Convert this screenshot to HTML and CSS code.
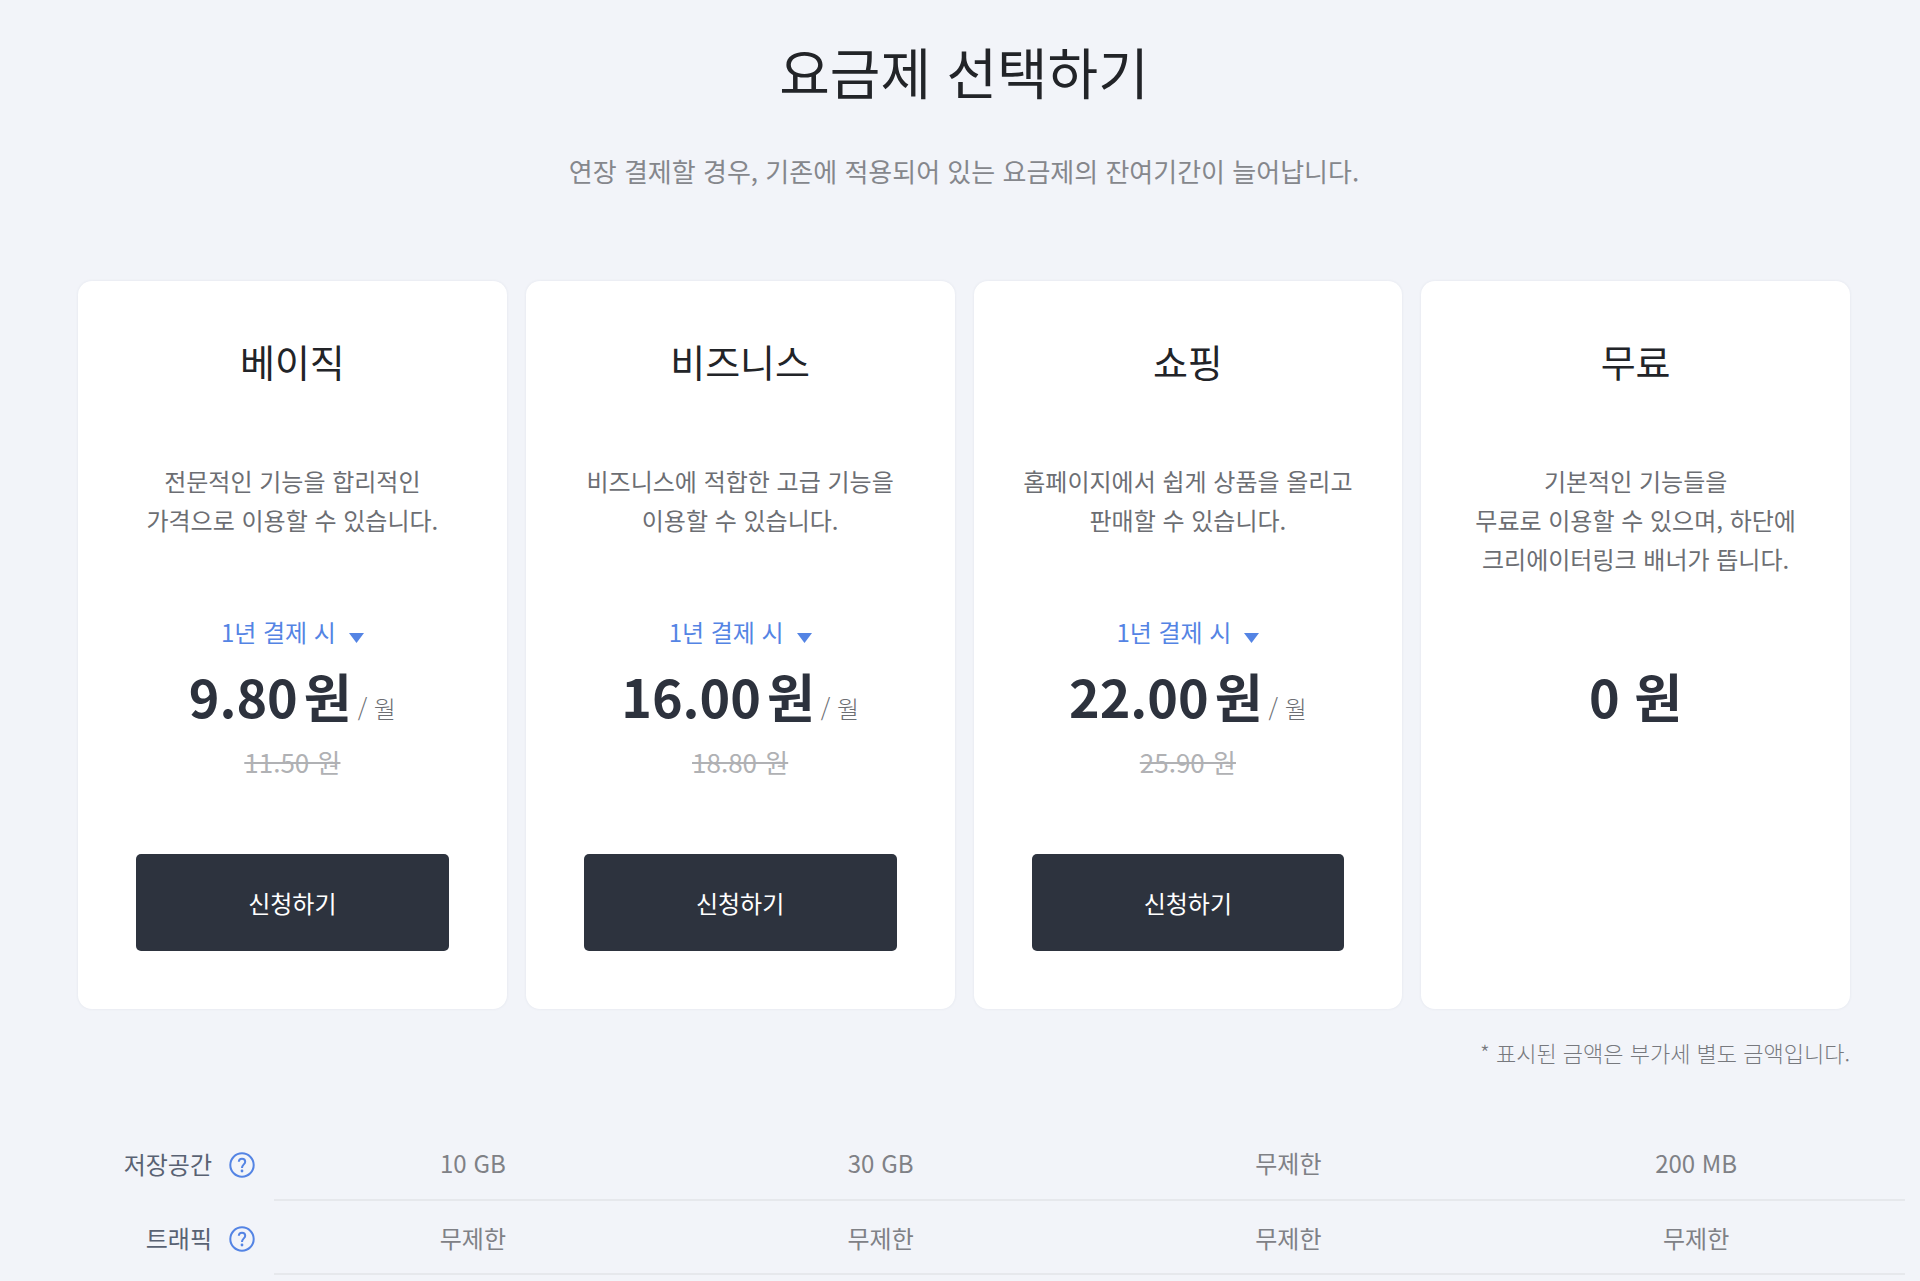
FILE: index.html
```html
<!DOCTYPE html>
<html lang="ko">
<head>
    <meta charset="UTF-8">
    <meta name="viewport" content="width=device-width, initial-scale=1.0">
    <title>요금제 선택하기</title>
    <link rel="stylesheet" href="styles.css">
</head>
<body>
    <header class="page-header">
        <h1>요금제 선택하기</h1>
        <p>연장 결제할 경우, 기존에 적용되어 있는 요금제의 잔여기간이 늘어납니다.</p>
    </header>

    <main>
        <section class="pricing">
            <div class="plans">
                <article class="plan">
                    <h2>베이직</h2>
                    <p class="plan-desc">전문적인 기능을 합리적인<br>가격으로 이용할 수 있습니다.</p>
                    <div class="plan-period">
                        <div class="period-select">
                            <select aria-label="베이직 결제 기간">
                                <option>1년 결제 시</option>
                            </select>
                            <svg class="caret" viewBox="0 0 15 10" aria-hidden="true"><path d="M0 0h15L7.5 10z"/></svg>
                        </div>
                    </div>
                    <p class="plan-price"><strong>9.80</strong><strong class="won">원</strong><span class="per">/ 월</span></p>
                    <p class="plan-old"><del>11.50 원</del></p>
                    <button type="button" class="btn-apply">신청하기</button>
                </article>

                <article class="plan">
                    <h2>비즈니스</h2>
                    <p class="plan-desc">비즈니스에 적합한 고급 기능을<br>이용할 수 있습니다.</p>
                    <div class="plan-period">
                        <div class="period-select">
                            <select aria-label="비즈니스 결제 기간">
                                <option>1년 결제 시</option>
                            </select>
                            <svg class="caret" viewBox="0 0 15 10" aria-hidden="true"><path d="M0 0h15L7.5 10z"/></svg>
                        </div>
                    </div>
                    <p class="plan-price"><strong>16.00</strong><strong class="won">원</strong><span class="per">/ 월</span></p>
                    <p class="plan-old"><del>18.80 원</del></p>
                    <button type="button" class="btn-apply">신청하기</button>
                </article>

                <article class="plan">
                    <h2>쇼핑</h2>
                    <p class="plan-desc">홈페이지에서 쉽게 상품을 올리고<br>판매할 수 있습니다.</p>
                    <div class="plan-period">
                        <div class="period-select">
                            <select aria-label="쇼핑 결제 기간">
                                <option>1년 결제 시</option>
                            </select>
                            <svg class="caret" viewBox="0 0 15 10" aria-hidden="true"><path d="M0 0h15L7.5 10z"/></svg>
                        </div>
                    </div>
                    <p class="plan-price"><strong>22.00</strong><strong class="won">원</strong><span class="per">/ 월</span></p>
                    <p class="plan-old"><del>25.90 원</del></p>
                    <button type="button" class="btn-apply">신청하기</button>
                </article>

                <article class="plan">
                    <h2>무료</h2>
                    <p class="plan-desc">기본적인 기능들을<br>무료로 이용할 수 있으며, 하단에<br>크리에이터링크 배너가 뜹니다.</p>
                    <div class="plan-period"></div>
                    <p class="plan-price"><strong>0 원</strong></p>
                </article>
            </div>
            <p class="vat-note">* 표시된 금액은 부가세 별도 금액입니다.</p>
        </section>

        <section class="features">
            <table class="feature-table">
                <tbody>
                    <tr>
                        <th scope="row">
                            <div class="feature-name">
                                <span>저장공간</span>
                                <button type="button" class="help" aria-label="저장공간 도움말">
                                    <svg viewBox="0 0 26 26"><circle cx="13" cy="13" r="11.7"/><path d="M9.8 9.8c.1-1.8 1.4-3 3.2-3s3.2 1.1 3.2 2.9c0 2.6-3.2 2.8-3.2 6.2"/><circle class="dot" cx="13" cy="19" r="1.4"/></svg>
                                </button>
                            </div>
                        </th>
                        <td>10 GB</td>
                        <td>30 GB</td>
                        <td>무제한</td>
                        <td>200 MB</td>
                    </tr>
                    <tr>
                        <th scope="row">
                            <div class="feature-name">
                                <span>트래픽</span>
                                <button type="button" class="help" aria-label="트래픽 도움말">
                                    <svg viewBox="0 0 26 26"><circle cx="13" cy="13" r="11.7"/><path d="M9.8 9.8c.1-1.8 1.4-3 3.2-3s3.2 1.1 3.2 2.9c0 2.6-3.2 2.8-3.2 6.2"/><circle class="dot" cx="13" cy="19" r="1.4"/></svg>
                                </button>
                            </div>
                        </th>
                        <td>무제한</td>
                        <td>무제한</td>
                        <td>무제한</td>
                        <td>무제한</td>
                    </tr>
                </tbody>
            </table>
        </section>
    </main>
</body>
</html>
```
FILE: styles.css
```css
* {
    box-sizing: border-box;
}
body {
    margin: 0;
    font-family: "Noto Sans CJK KR", sans-serif;
    font-size: 24px;
    color: #222428;
    background-color: #f2f4f9;
}
h1, h2, p {
    margin: 0;
    font-weight: 400;
}
button, select {
    font: inherit;
    border: none;
    cursor: pointer;
}
.page-header {
    padding: 30px 70px 0 78px;
    text-align: center;
}
.page-header h1 {
    font-size: 55px;
    line-height: 80px;
}
.page-header p {
    margin-top: 41px;
    font-size: 26px;
    line-height: 40px;
    color: #85878c;
}

/* Plan cards */
.pricing {
    padding: 90px 70px 0 78px;
}
.plans {
    display: grid;
    grid-template-columns: repeat(4, 1fr);
    gap: 19px;
}
.plan {
    display: flex;
    flex-direction: column;
    padding: 52px 58px 58px;
    text-align: center;
    background-color: #fff;
    border-radius: 14px;
    box-shadow: 0 0 3px rgba(40, 50, 90, 0.08);
}
.plan h2 {
    font-size: 38px;
    line-height: 56px;
}
.plan-desc {
    min-height: 117px;
    margin: 72px -30px 0;
    line-height: 39px;
    color: #6c6e73;
}
.plan-period {
    display: flex;
    justify-content: center;
    height: 36px;
    margin-top: 35px;
}
.period-select {
    position: relative;
}
.period-select select {
    height: 36px;
    padding: 0 30px 0 0;
    color: #5484e4;
    background: none;
    appearance: none;
}
.caret {
    position: absolute;
    right: 0;
    top: 20px;
    width: 15px;
    height: 10px;
    fill: #5484e4;
    pointer-events: none;
}
.plan-price {
    display: flex;
    justify-content: center;
    align-items: baseline;
    margin-top: 12px;
    line-height: 70px;
    white-space: nowrap;
    color: #2d323d;
}
.plan-price strong {
    font-size: 52px;
    font-weight: 700;
}
.plan-price .won {
    margin-left: 6px;
}
.plan-price .per {
    margin-left: 6px;
    font-weight: 300;
    color: #6c6e73;
}
.plan-old {
    font-size: 26px;
    line-height: 38px;
    color: #b0b1b4;
}
.btn-apply {
    height: 97px;
    margin-top: 73px;
    color: #fff;
    background-color: #2d333e;
    border-radius: 5px;
}
.vat-note {
    margin-top: 27px;
    font-size: 22px;
    font-weight: 300;
    line-height: 32px;
    text-align: right;
    color: #77797e;
}

/* Feature comparison */
.features {
    padding: 58px 15px 0 78px;
}
.feature-table {
    width: 100%;
    table-layout: fixed;
    border-collapse: collapse;
}
.feature-table th {
    width: 196px;
    padding: 0 19px 0 0;
    font-weight: 400;
    color: #596273;
}
.feature-table td {
    height: 74px;
    padding: 0 10px 0 0;
    text-align: center;
    color: #7f8186;
    border-bottom: 2px solid #e6e8ec;
}
.feature-name {
    display: flex;
    justify-content: flex-end;
    align-items: center;
    gap: 17px;
}
.help {
    width: 26px;
    height: 26px;
    margin-top: 4px;
    padding: 0;
    background: none;
}
.help svg {
    display: block;
    fill: none;
    stroke: #5484e4;
    stroke-width: 2;
}
.help .dot {
    fill: #5484e4;
    stroke: none;
}
```
